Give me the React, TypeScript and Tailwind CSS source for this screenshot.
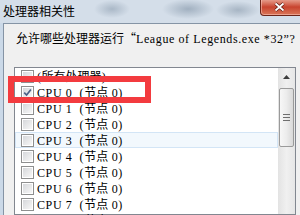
import React from 'react';

const CJK = /([\u3000-\u303f\u4e00-\u9fff\uff00-\uffef“]+)/;

// SimSun-ish: CJK at 12px full width, latin in a serif face
function Mixed({ text }: { text: string }) {
    const parts = text.split(CJK);
    return (
        <>
            {parts.map((p, i) =>
                p === '' ? null : CJK.test(p) ? (
                    <span key={i} className="font-[family-name:'Noto_Sans_CJK_SC',sans-serif]">{p}</span>
                ) : (
                    <span key={i} className="font-[family-name:'Liberation_Serif',serif] tracking-[0.6px]">{p}</span>
                )
            )}
        </>
    );
}

function CheckBox({ checked }: { checked?: boolean }) {
    return (
        <div className="w-[13px] h-[13px] shrink-0 border border-[#8e8f8f] bg-white p-px">
            <div className="w-full h-full bg-linear-to-br from-[#d6d8db] to-[#f7f7f7] flex items-center justify-center">
                {checked && (
                    <svg width="9" height="9" viewBox="0 0 9 9">
                        <path d="M1.2 4.6 L3.6 7 L7.9 1.5" fill="none" stroke="#4b6187" strokeWidth="1.7" />
                    </svg>
                )}
            </div>
        </div>
    );
}

const rows = [
    '(所有处理器)',
    'CPU 0  (节点 0)',
    'CPU 1  (节点 0)',
    'CPU 2  (节点 0)',
    'CPU 3  (节点 0)',
    'CPU 4  (节点 0)',
    'CPU 5  (节点 0)',
    'CPU 6  (节点 0)',
    'CPU 7  (节点 0)',
    'CPU 8  (节点 0)',
];

export default function App() {
    return (
        <div lang="zh-CN" className="relative w-[300px] h-[215px] overflow-hidden bg-[#cbd9e8] flex flex-col text-black text-[12px] leading-[16px]">
            {/* 标题栏 */}
            <div className="h-[23px] shrink-0 flex items-start bg-[#d4dee9] bg-[radial-gradient(ellipse_18px_9px_at_112px_9px,#aab8c7,transparent),radial-gradient(ellipse_26px_10px_at_188px_9px,#a1b0c0,transparent),radial-gradient(ellipse_22px_9px_at_238px_10px,#a7b5c4,transparent)]">
                <div className="pl-[3px] pt-[3px] font-[family-name:'Noto_Sans_CJK_SC',sans-serif] text-[12px] leading-[16px]">处理器相关性</div>
                <div className="ml-auto mr-[-4px] mt-[-1px] w-[44px] h-[17px] rounded-b-[4px] border border-t-0 border-[#6b2418] bg-linear-to-b from-[#e8a696] via-[#c8432e] to-[#d97658] flex items-center justify-center pr-[6px] shadow-[inset_0_0_0_1px_rgba(255,210,200,0.5)]">
                    <svg width="11" height="10" viewBox="0 0 11 10">
                        <path d="M1.5 1.5 L9.5 8.5 M9.5 1.5 L1.5 8.5" stroke="#5a1a10" strokeWidth="3.2" />
                        <path d="M1.5 1.5 L9.5 8.5 M9.5 1.5 L1.5 8.5" stroke="#ffffff" strokeWidth="1.8" />
                    </svg>
                </div>
            </div>

            <div className="flex-1 flex min-h-0">
                <div className="w-[3px] shrink-0" />
                <div className="flex-1 flex flex-col bg-[#f0f0f0] border-l border-t border-[#8594a5] min-w-0">
                    <div className="pl-[12px] pt-[6px] whitespace-pre">
                        <Mixed text={'允许哪些处理器运行“League of Legends.exe *32”?'} />
                    </div>

                    {/* 列表框 */}
                    <div className="mt-[20px] ml-[10px] mr-[4px] flex-1 flex border border-[#828790] bg-white min-h-0">
                        <div className="flex-1 flex flex-col">
                            {rows.map((r, i) => (
                                <div
                                    key={r}
                                    className={`h-[16px] shrink-0 flex items-center pl-[5px] whitespace-pre border ${i === 4 ? 'border-[#d3e5f6] bg-[#f2f8fd]' : 'border-transparent'}`}
                                >
                                    <CheckBox checked={i === 1} />
                                    <span className="ml-[3px]">
                                        <Mixed text={r} />
                                    </span>
                                </div>
                            ))}
                        </div>

                        {/* 滚动条 */}
                        <div className="w-[17px] shrink-0 flex flex-col bg-linear-to-r from-[#e3e3e3] via-[#f0f0f0] to-[#e6e6e6]">
                            <div className="h-[17px] flex items-center justify-center">
                                <svg width="7" height="4" viewBox="0 0 7 4">
                                    <path d="M0 4 L3.5 0 L7 4 Z" fill="#3d3d3d" />
                                </svg>
                            </div>
                            <div className="mt-[3px] mx-px h-[59px] rounded-[2px] border border-[#9a9a9a] bg-linear-to-r from-[#f7f7f7] via-[#ececec] to-[#d9d9d9] flex flex-col items-center justify-center gap-[2px]">
                                <div className="w-[7px] h-px bg-[#6e6e6e]" />
                                <div className="w-[7px] h-px bg-[#6e6e6e]" />
                                <div className="w-[7px] h-px bg-[#6e6e6e]" />
                            </div>
                        </div>
                    </div>
                </div>
            </div>

            {/* 红色标注框 */}
            <div className="absolute left-[8px] top-[76px] w-[143px] h-[27px] border-[6px] border-[#f33b3f]" />
        </div>
    );
}
